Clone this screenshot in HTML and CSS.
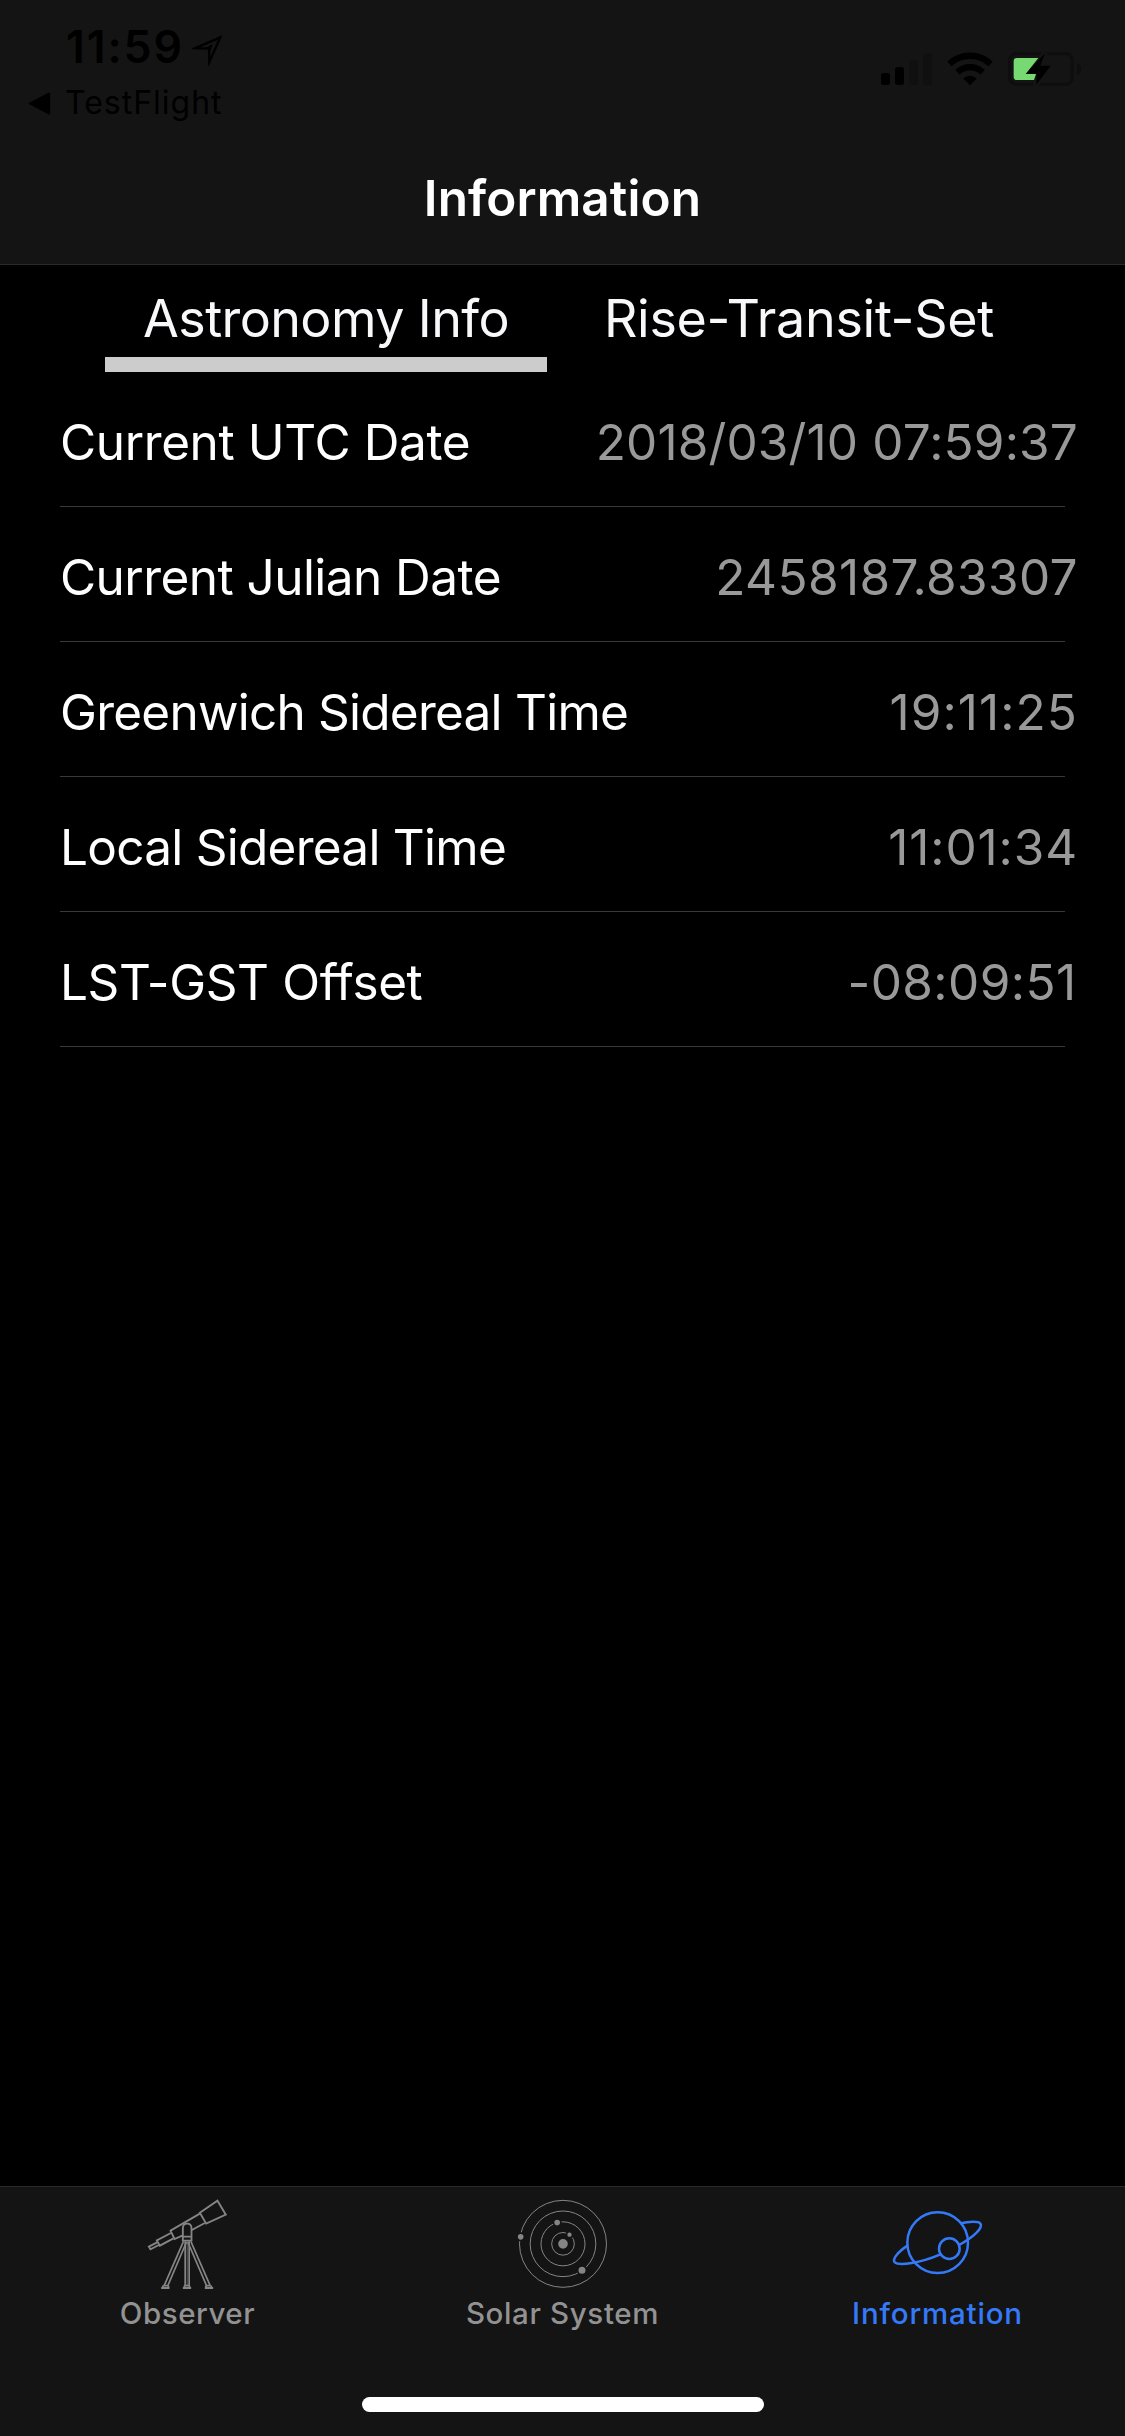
FILE: index.html
```html
<!DOCTYPE html>
<html lang="en">
<head>
<meta charset="utf-8">
<title>Information</title>
<link rel="stylesheet" href="styles.css">
</head>
<body>
<div class="screen">
  <header class="header">
    <div class="status">
      <div class="status-left">
        <div class="clock">
          <span class="time">11:59</span>
          <svg class="location" viewBox="0 0 96 96"><path d="M10 42.500 L85 10 L52 84 L51.500 44 Z" fill="none" stroke="#000" stroke-width="7" stroke-miterlimit="8"/><path d="M38 42 L62 31 L55 52 L52 42 Z"/></svg>
        </div>
        <div class="back">
          <svg class="back-arrow" viewBox="0 0 66 68"><path d="M4 34 L62 4 V64 Z" stroke="#000" stroke-width="5" stroke-linejoin="round"/></svg>
          <span>TestFlight</span>
        </div>
      </div>
      <svg class="indicators" viewBox="0 0 795 240">
        <g>
          <rect x="63" y="129" width="27" height="36" rx="8"/>
          <rect x="105" y="111" width="27" height="54" rx="8"/>
          <rect x="147" y="90" width="27" height="75" rx="8" fill="#101010"/>
          <rect x="189" y="69" width="27" height="96" rx="8" fill="#101010"/>
        </g>
        <g fill="none" stroke="#000" stroke-width="19">
          <path d="M268.500 102 A89 89 0 0 1 391.500 102"/>
          <path d="M292 126.500 A56 56 0 0 1 368 126.500"/>
        </g>
        <path d="M310 145.500 A29 29 0 0 1 350 145.500 L330 166 Z"/>
        <rect x="449" y="71" width="188" height="92" rx="20" fill="none" stroke="#0e0e0e" stroke-width="10"/>
        <path d="M651 99 Q663 106 663 117 Q663 129 651 136 Z" fill="#0e0e0e"/>
        <path d="M556 68 L497 132 H530 L527 166 L572 107 H541 Z" stroke="#141414" stroke-width="16" fill="#141414"/>
        <path d="M471 84 H535 L497 132 H528 L522 150 H471 Q461 150 461 140 V94 Q461 84 471 84 Z" fill="#77d971"/>
        <path d="M555 70 L498 131.500 H530 L529 164 L572 107.500 H541 Z"/>
      </svg>
    </div>
    <h1 class="title">Information</h1>
  </header>

  <main class="content">
    <nav class="segments">
      <span class="segment segment-active astro">Astronomy Info</span>
      <span class="segment rise">Rise-Transit-Set</span>
    </nav>
    <dl class="rows">
      <div class="row utc"><dt>Current UTC Date</dt><dd>2018/03/10 07:59:37</dd></div>
      <div class="row julian"><dt>Current Julian Date</dt><dd>2458187.83307</dd></div>
      <div class="row greenwich"><dt>Greenwich Sidereal Time</dt><dd>19:11:25</dd></div>
      <div class="row local"><dt>Local Sidereal Time</dt><dd>11:01:34</dd></div>
      <div class="row offset"><dt>LST-GST Offset</dt><dd>-08:09:51</dd></div>
    </dl>
  </main>

  <footer class="tabbar">
    <div class="tabs">
      <div class="tab observer">
        <svg class="tab-icon" viewBox="142.5 42 300 300" fill="none" stroke="#858585" stroke-width="5.500">
          <path d="M381 62 L406 104 L347 131 L328 98 Z"/>
          <path d="M328 101 L240 152 L252 177 L277 166 M304 150 L343 129"/>
          <path d="M241 159 L199 181 L208 197 L249 175"/>
          <path d="M200 187 L175 200 L180 208 L205 195"/>
          <path d="M277 182 V145 Q277 131 290 131 Q303 131 303 145 V182 Z M277 170 H303" fill="#141414"/>
          <path d="M279 184 L221 317 M288 186 L232 317 M301 184 L359 317 M292 186 L348 317" stroke-width="5"/>
          <path d="M284 184 V317 M296 184 V317" stroke-width="5"/>
          <path d="M290 184 V317" stroke-width="2"/>
          <path d="M212 324 H237 M277 324 H302 M343 324 H368 M219 316 L216 323 M232 316 L235 323 M219 317 H232 M283 316 L281 323 M296 316 L298 323 M283 317 H296 M348 316 L345 323 M360 316 L364 323 M348 317 H360"/>
        </svg>
        <span class="tab-label">Observer</span>
      </div>
      <div class="tab solar">
        <svg class="tab-icon" viewBox="187.5 42 300 300">
          <g fill="none" stroke="#858585" stroke-width="3">
            <circle cx="337.500" cy="191.500" r="34"/>
            <circle cx="337.500" cy="191.500" r="66"/>
            <circle cx="337.500" cy="191.500" r="98.500"/>
            <circle cx="337.500" cy="191.500" r="130.500"/>
          </g>
          <g fill="#858585" stroke="#141414" stroke-width="5">
            <circle cx="337.500" cy="191.500" r="17"/>
            <circle cx="357" cy="164" r="9"/>
            <circle cx="320" cy="127.500" r="11"/>
            <circle cx="394.500" cy="271" r="13"/>
            <circle cx="210.500" cy="170.500" r="11"/>
          </g>
        </svg>
        <span class="tab-label">Solar System</span>
      </div>
      <div class="tab info tab-active">
        <svg class="tab-icon" viewBox="172.5 42 300 300" fill="none" stroke="#347af8" stroke-width="7.500">
          <circle cx="321.500" cy="188" r="91"/>
          <circle cx="356.500" cy="206" r="31"/>
          <path d="M231 197 C202 216 184 238 193 247 C205 258 270 249 328 224"/>
          <path d="M386 195 C430 171 458 144 450 131 C444 123 415 124 391 130"/>
        </svg>
        <span class="tab-label">Information</span>
      </div>
    </div>
    <div class="home-indicator"></div>
  </footer>
</div>
</body>
</html>
```
FILE: styles.css
```css
* { box-sizing: border-box; }

body {
  margin: 0;
  background: #000;
  color: #fff;
  font-family: Inter, "Liberation Sans", sans-serif;
  font-weight: 400;
}

svg { display: block; flex: none; }

.screen {
  width: 1125px;
  height: 2436px;
  display: flex;
  flex-direction: column;
  overflow: hidden;
}

/* Header */
.header {
  height: 265px;
  background: #141414;
  border-bottom: 1px solid #2a2a2a;
}

.status {
  height: 132px;
  display: flex;
  justify-content: space-between;
  color: #000;
}

.status-left { padding: 20px 0 0 28px; }

.clock {
  display: flex;
  align-items: center;
  height: 54px;
  padding-left: 38px;
}

.time {
  font-size: 44.5px;
  font-weight: 600;
  line-height: 54px;
  letter-spacing: 1.9px;
}

.location { width: 32px; height: 32px; margin: 5px 0 0 8px; }

.back {
  display: flex;
  align-items: center;
  gap: 14px;
  height: 58px;
  font-size: 32px;
  line-height: 58px;
  letter-spacing: 1px;
}

.back-arrow { width: 23px; height: 23px; }

.indicators { width: 265px; height: 80px; margin-top: 30px; }

.title {
  margin: 0;
  text-align: center;
  font-size: 49.5px;
  font-weight: 600;
  line-height: 132px;
  letter-spacing: .1px;
}

/* Content */
.content { flex: 1; }

.segments {
  display: grid;
  grid-template-columns: 1fr 1fr;
  gap: 31px;
  height: 107px;
  padding: 0 105px;
}

.segment {
  color: #f8f8fa;
  text-align: center;
  font-size: 52px;
  line-height: 107px;
}

.segment-active { box-shadow: inset 0 -15px #ccc; }
.astro { letter-spacing: -.6px; }
.rise { letter-spacing: -.28px; }

.rows { margin: 0 60px; }

.row {
  display: flex;
  justify-content: space-between;
  height: 135px;
  padding-top: 6px;
  border-bottom: 1px solid #363a39;
  font-size: 49.5px;
  line-height: 128px;
  white-space: nowrap;
}

.row dd { margin: 0 -13px 0 0; color: #999; }

.utc dt { letter-spacing: -.38px; }
.utc dd { letter-spacing: .15px; }
.julian dt { letter-spacing: -.55px; }
.julian dd { letter-spacing: .37px; }
.greenwich dt { letter-spacing: -.76px; }
.greenwich dd { letter-spacing: 1.07px; }
.local dt { letter-spacing: -.74px; }
.local dd { letter-spacing: .87px; }
.offset dt { letter-spacing: -.4px; }
.offset dd { letter-spacing: .41px; margin-right: -11.5px; }

/* Tab bar */
.tabbar {
  height: 250px;
  display: flex;
  flex-direction: column;
  align-items: center;
  justify-content: space-between;
  padding: 7px 0 24px;
  background: #141414;
  border-top: 1px solid #2a2a2a;
}

.tabs {
  width: 100%;
  display: grid;
  grid-template-columns: repeat(3, 1fr);
}

.tab {
  display: flex;
  flex-direction: column;
  align-items: center;
  color: #929292;
}

.tab-active { color: #347af8; }
.tab-icon { width: 100px; height: 100px; }

.tab-label {
  font-size: 29.5px;
  font-weight: 500;
  line-height: 38px;
}

.observer .tab-label { letter-spacing: .54px; }
.solar .tab-label { letter-spacing: .64px; }
.info .tab-label { letter-spacing: .82px; }

.home-indicator {
  width: 402px;
  height: 15px;
  border-radius: 8px;
  background: #fff;
}
```
